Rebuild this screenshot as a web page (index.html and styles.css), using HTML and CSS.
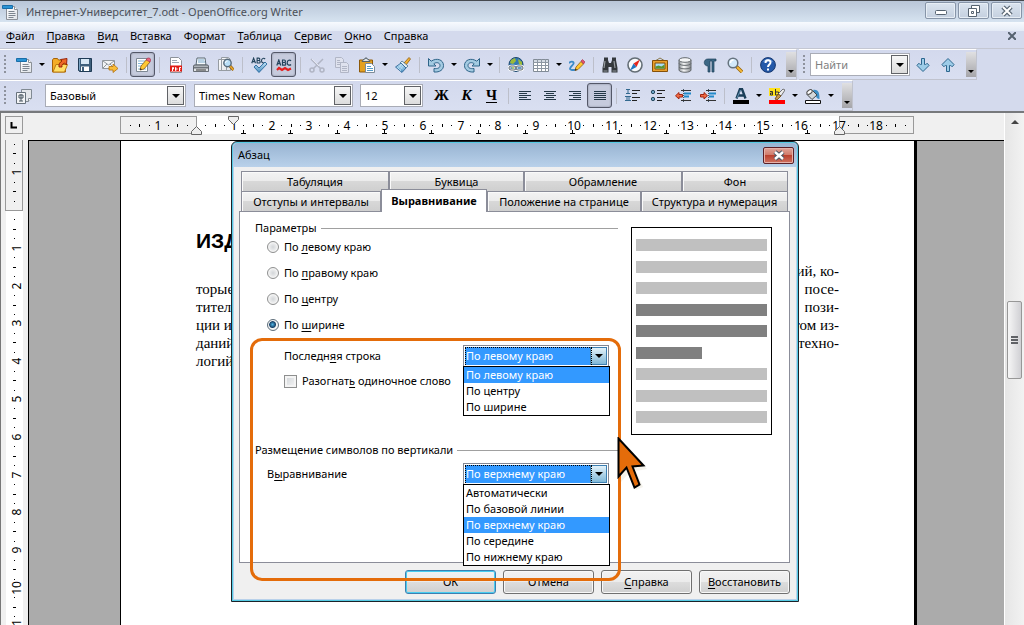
FILE: index.html
```html
<!DOCTYPE html>
<html lang="ru">
<head>
<meta charset="utf-8">
<title>Интернет-Университет_7.odt - OpenOffice.org Writer</title>
<link rel="stylesheet" href="styles.css">
</head>
<body>
<svg class="defs" aria-hidden="true">
  <defs>
    <linearGradient id="blue" x1="0" y1="0" x2="0" y2="1"><stop offset="0" stop-color="#c4e4f6"/><stop offset="1" stop-color="#4b8fc0"/></linearGradient>
    <linearGradient id="paper" x1="0" y1="0" x2="1" y2="1"><stop offset="0" stop-color="#fff"/><stop offset="1" stop-color="#dfe3e8"/></linearGradient>
    <linearGradient id="metal" x1="0" y1="0" x2="1" y2="0"><stop offset="0" stop-color="#8a8f94"/><stop offset=".4" stop-color="#fafafa"/><stop offset="1" stop-color="#85898d"/></linearGradient>
    <symbol id="doc" viewBox="0 0 16 16"><path d="M4.500 2.500h8l3 3v10h-11z" fill="url(#paper)" stroke="#8b9097"/><path d="M12.500 2.500v3h3" fill="#fff" stroke="#8b9097"/><path d="M.5 1.500h10v3h-10z" fill="#2a93d5" stroke="#1a6ea8"/><path d="M6.500 7.500h6M6.500 9.500h7M6.500 11.500h7M6.500 13.500h5" stroke="#7c858f"/></symbol>
    <symbol id="open" viewBox="0 0 16 16"><path d="M.5 15V3l1-1.500h4l1 1.500h7v12z" fill="#f4ac27" stroke="#a5620a"/><path d="M1 15l3-7.500h11.500l-3 7.500z" fill="#ffdf68" stroke="#bd7c10"/><path d="M7 10c-.5-3 1-5 3-6L8.500 2.500 15 1.500 14.500 8l-2-2C10.500 7 9.500 8 10 10z" fill="#ee6a28" stroke="#8f1a05" stroke-width=".9"/></symbol>
    <symbol id="save" viewBox="0 0 16 16"><path d="M1.500 1.500h13v13h-12l-1-1z" fill="#3e607c" stroke="#1f3b55"/><path d="M4 2h8v5H4z" fill="#d8e8f5"/><path d="M4 9.500h8V14H4z" fill="#fff"/><path d="M5 10h2v4H5z" fill="#3e607c"/><path d="M2.500 2v11" stroke="#7ba4c4"/></symbol>
    <symbol id="mail" viewBox="0 0 16 16"><path d="M.5 3.500h12v8H.5z" fill="#f3f4f5" stroke="#91979c"/><path d="M1 4l5.500 4L12 4M1 11l4-4M12 11L8 7" fill="none" stroke="#91979c"/><path d="M7 9.500h4V7l5 4.500-5 4V13H7z" fill="#f9bd38" stroke="#b2700c" stroke-width=".8"/></symbol>
    <symbol id="edit" viewBox="0 0 16 16"><path d="M1.500 1.500h11v13h-11z" fill="#fff" stroke="#7d8893"/><path d="M3 4h7M3 6.500h6M3 9h4M3 12h8" stroke="#82b5d8"/><path d="M5 13l1-4 6-7 3 3-6 7z" fill="#ffc933" stroke="#8f5c11" stroke-width=".8"/><path d="M11 3l1.500-2h2L16 3l-1 2z" fill="#e9657d" stroke="#9d2e48" stroke-width=".6"/><path d="M5 13l.5-2 1.500 1.500z" fill="#222"/></symbol>
    <symbol id="pdf" viewBox="0 0 16 16"><path d="M2.500.5h8l3 3v12h-11z" fill="#fff" stroke="#8c9299"/><path d="M4 3.500h5M4 5.500h7" stroke="#99a5b0"/><path d="M2 8.500h12v6H2z" fill="#e01c14"/><path d="M4.500 14V10.500h1v1.500h-1M7.500 10.500v3h.5l.8-.8v-1.400l-.8-.8zM11.500 14v-3.500H13M11.500 12.200h1" fill="none" stroke="#fff"/></symbol>
    <symbol id="print" viewBox="0 0 16 16"><path d="M4 1h8l1 7H3z" fill="#f5f9fc" stroke="#5b6a75"/><path d="M5 3h6M5 5h7" stroke="#7aaacc"/><path d="M1 8h14l1 3H0z" fill="#aeb4b9" stroke="#4b5258" stroke-width=".8"/><path d="M.5 11h15v3.500H.5z" fill="#e1e4e6" stroke="#4b5258" stroke-width=".8"/><path d="M3 13h10" stroke="#333"/></symbol>
    <symbol id="preview" viewBox="0 0 16 16"><path d="M.5 2.500h8v11h-8zM3.500.5h7l2 2v11h-9z" fill="url(#paper)" stroke="#969ca2"/><path d="M12 9l3.500 4" stroke="#8a5a10" stroke-width="3"/><path d="M12 9l3.500 4" stroke="#e9a62c" stroke-width="1.600"/><circle cx="9.500" cy="6" r="3.700" fill="#b9dff7" stroke="#55697a" stroke-width="1.400"/><path d="M7.500 6c0-1.500 1-2 2-2" fill="none" stroke="#fff"/></symbol>
    <symbol id="abc" viewBox="0 0 16 7"><path d="M.8 6.500L2.800 1l2 5.500M1.500 4.700h2.600M6.500 1v5M6 1h2.300c1.500 0 1.500 2.500 0 2.500h-2M6 6.200h2.700c1.500 0 1.500-2.700-.4-2.700M15 2c-1-1.500-3.800-1-3.800 1.700S14 6.700 15 5.500" fill="none" stroke="#24445c" stroke-width="1.200"/></symbol>
    <symbol id="spell" viewBox="0 0 16 16"><use href="#abc" width="15" height="7" x="0" y="0"/><path d="M3 10l2-2 3 3 6-6 2 2-8 8.500z" fill="url(#blue)" stroke="#155c94" stroke-width=".8"/></symbol>
    <symbol id="auto" viewBox="0 0 16 16"><use href="#abc" width="16" height="7" x="0" y="2"/><path d="M1 13l2-2 3 2 3-2 3 2 3-1.500" fill="none" stroke="#e32020" stroke-width="2.200"/></symbol>
    <symbol id="cut" viewBox="0 0 16 16"><path d="M2 2l10 10M14 2L4 12" stroke="#b0b5c4" stroke-width="1.500"/><path d="M3 2l7 7" stroke="#e4e6f0"/><circle cx="3" cy="13" r="2" fill="none" stroke="#b0b5c4" stroke-width="1.500"/><circle cx="13" cy="13" r="2" fill="none" stroke="#b0b5c4" stroke-width="1.500"/></symbol>
    <symbol id="copy" viewBox="0 0 16 16"><g fill="#dfe2ee" stroke="#b1b6c6"><path d="M1.500.5h6l2 2v8h-8z"/><path d="M6.500 5.500h6l2 2v8h-8z"/><path d="M3 3.500h3M3 5.500h4M3 7.500h3M8 9.500h5M8 11.500h5M8 13.500h5"/></g></symbol>
    <symbol id="paste" viewBox="0 0 16 16"><path d="M.5 3h13v12H.5z" fill="#e3a021" stroke="#8d5909"/><path d="M3 4.500L5 2h1L7 .5 8 2h1l2 2.500z" fill="#dde3e7" stroke="#56616a"/><path d="M6.500 6.500h6l3 3v6h-9z" fill="#fff" stroke="#7e8c99"/><path d="M8 9.500h4M8 11.500h6M8 13.500h6" stroke="#579bc9"/></symbol>
    <symbol id="brush" viewBox="0 0 16 16"><path d="M9 6l5-5.500 1.500 1.500L11 8z" fill="#f2b132" stroke="#8d5a0c" stroke-width=".8"/><path d="M7 4l6 5-2 2-6-5z" fill="#e5edf2" stroke="#457391" stroke-width=".8"/><path d="M6 6l5 5-4 4.500L.5 10z" fill="url(#blue)" stroke="#225d91" stroke-width=".8"/><path d="M2 10l4 4M4 8.500l4 4M3 12l3-4M5 13l3-4" stroke="#bfe5fb" stroke-width=".7"/></symbol>
    <symbol id="undo" viewBox="0 0 16 16"><path d="M.5 1.500v7.500h7.500L5.800 6.800C8 4.800 12 5.500 12 8.500c0 2.500-2.500 3.500-6 3v3.500c6 .5 9.500-2.500 9.500-6.500C15.500 2.500 8.500.5 3.200 4.200z" fill="#a4cbe2" stroke="#2f6489"/></symbol>
    <symbol id="redo" viewBox="0 0 16 16"><use href="#undo" width="16" height="16" transform="matrix(-1 0 0 1 16 0)"/></symbol>
    <symbol id="globe" viewBox="0 0 16 16"><circle cx="8" cy="7.500" r="7" fill="#3279b4" stroke="#1d476c"/><path d="M3 3l4-2 1 3-3 3-3-1zM10 2l4 3v4l-3-2zM3 9l3 1v4z" fill="#9dba38"/><rect x="1" y="9" width="7" height="4" rx="2" fill="none" stroke="#fff" stroke-width="2.400"/><rect x="8" y="9" width="7" height="4" rx="2" fill="none" stroke="#fff" stroke-width="2.400"/><rect x="1" y="9" width="7" height="4" rx="2" fill="none" stroke="#59636b"/><rect x="8" y="9" width="7" height="4" rx="2" fill="none" stroke="#59636b"/></symbol>
    <symbol id="table" viewBox="0 0 16 16"><path d="M.5 2.500h15v12H.5z" fill="#fff" stroke="#818b96"/><path d="M1 3h14v2H1z" fill="#d4dbe3"/><path d="M0 5.500h16M0 8.500h16M0 11.500h16M4.500 2v12M8.500 2v12M12.500 2v12" stroke="#8d97a2"/></symbol>
    <symbol id="draw" viewBox="0 0 16 16"><path d="M0 6c3-2.500 6-1 4 1.500s-5 5-1 5.500h3" fill="none" stroke="#3b8ac8" stroke-width="1.800"/><path d="M6 13.500l1-3.500 5-5.500 2.500 2.500-5.500 5.500z" fill="#ffc72f" stroke="#8e5a0d" stroke-width=".8"/><path d="M12 4l1.500-1.500L16 5l-1.500 2z" fill="#e5526b" stroke="#9d2e48" stroke-width=".6"/><path d="M6 13.500l.5-2L8 13z" fill="#222"/></symbol>
    <symbol id="find" viewBox="0 0 16 16"><path d="M2 3V.5h4V3l1 3h2l1-3V.5h4V3l1.500 8v4.500h-6V10h-3v5.500h-6V11z" fill="#33383c"/><path d="M3 4l-1 7M12 4l1 7M1.500 14h4M10.500 14h4" stroke="#959b9f" stroke-width="1.200"/></symbol>
    <symbol id="compass" viewBox="0 0 16 16"><circle cx="8" cy="8" r="7" fill="#f8fbfd" stroke="#646e75" stroke-width="1.600"/><path d="M13 2.500L9.500 10 6.500 6.500z" fill="#e6281d"/><path d="M3 13.500L6.500 6.500 9.500 10z" fill="#2177c0"/></symbol>
    <symbol id="gallery" viewBox="0 0 16 16"><path d="M3 4l5-3 5 3" fill="none" stroke="#8a7a50"/><path d="M.5 3.500h15v11H.5z" fill="#e8a02c" stroke="#855008"/><path d="M3 6h10v6H3z" fill="#a9ddf7" stroke="#855008"/><path d="M3.500 11.500v-2l3-1 3 1 3-2v4z" fill="#5a952e"/></symbol>
    <symbol id="db" viewBox="0 0 16 16"><path d="M2 3v10c0 3 12 3 12 0V3z" fill="url(#metal)" stroke="#656a6e"/><ellipse cx="8" cy="3" rx="6" ry="2.300" fill="#f5f6f7" stroke="#656a6e"/><path d="M2 6.500c1 2.500 11 2.500 12 0M2 10c1 2.500 11 2.500 12 0" fill="none" stroke="#656a6e"/></symbol>
    <symbol id="para" viewBox="0 0 16 16"><path d="M14 2H6C1 2 1 9 6 9v6h2V4h2v11h2V4h2z" fill="#3b6785" stroke="#1c405a" stroke-width=".7"/></symbol>
    <symbol id="zoom" viewBox="0 0 16 16"><path d="M9 9l6 6" stroke="#98640b" stroke-width="3.400"/><path d="M10 10l5 5" stroke="#f5ba38" stroke-width="1.800"/><circle cx="6" cy="6" r="4.800" fill="#d3eafa" stroke="#66737e" stroke-width="1.500"/><path d="M3.500 6c0-2 1-3 3-3" fill="none" stroke="#fff" stroke-width="1.400"/></symbol>
    <symbol id="help" viewBox="0 0 16 16"><circle cx="8" cy="8" r="7.400" fill="#2459a9" stroke="#17386f"/><path d="M3 5c2-4 8-4 10 0-3-1-7-1-10 0z" fill="#6f9cd8"/><path d="M5.500 6c0-3.500 5-3.500 5-.5 0 2-2.500 2-2.500 4.500M8 11.500v2" fill="none" stroke="#fff" stroke-width="2"/></symbol>
    <symbol id="down" viewBox="0 0 16 16"><path d="M6.500 1.500h3v6c.5 1 1.500-1 3-1L14 8.500l-6 6-6-6 1.500-2c1.500 0 2.500 2 3 1z" fill="#9dcce8" stroke="#2c668e"/></symbol>
    <symbol id="up" viewBox="0 0 16 16"><use href="#down" width="16" height="16" transform="matrix(1 0 0 -1 0 16)"/></symbol>
    <symbol id="styles" viewBox="0 0 16 16"><path d="M5.500 1.500h10v9l-3 3h-7z" fill="#e3e6ea" stroke="#818a93"/><path d="M12.500 13.500v-3h3" fill="#fff" stroke="#818a93"/><path d="M.5 4.500h9v11h-9z" fill="#f3f4f6" stroke="#66717b"/><path d="M5 6v7M3 7h4v3H3zM3 13h4" fill="none" stroke="#46545f"/></symbol>
    <symbol id="al" viewBox="0 0 16 16"><path d="M2 3.500h12M2 5.500h8M2 7.500h12M2 9.500h8M2 11.500h12" stroke="#243947"/></symbol>
    <symbol id="ac" viewBox="0 0 16 16"><path d="M2 3.500h12M4 5.500h8M2 7.500h12M4 9.500h8M2 11.500h12" stroke="#243947"/></symbol>
    <symbol id="ar" viewBox="0 0 16 16"><path d="M2 3.500h12M6 5.500h8M2 7.500h12M6 9.500h8M2 11.500h12" stroke="#243947"/></symbol>
    <symbol id="aj" viewBox="0 0 16 16"><path d="M2 3.500h12M2 5.500h12M2 7.500h12M2 9.500h12M2 11.500h12" stroke="#243947"/></symbol>
    <symbol id="num" viewBox="0 0 16 16"><path d="M1 1.500h4M3 1.500v4M1 5.500h4M0 8.500h6M2 8.500v4M4 8.500v4M0 12.500h6" stroke="#33698f"/><path d="M7 2.500h8M7 5.500h5M7 9.500h8M7 12.500h5" stroke="#222"/></symbol>
    <symbol id="bul" viewBox="0 0 16 16"><circle cx="3" cy="4" r="1.700" fill="#6aa2c6" stroke="#26495f"/><circle cx="3" cy="11" r="1.700" fill="#6aa2c6" stroke="#26495f"/><path d="M7 2.500h8M7 5.500h5M7 9.500h8M7 12.500h5" stroke="#222"/></symbol>
    <symbol id="outd" viewBox="0 0 16 16"><path d="M8.500 1v14" stroke="#456" stroke-dasharray="1 1"/><path d="M6 2.500h10M6 12.500h10" stroke="#333"/><path d="M9 5.500h7M9 8.500h5" stroke="#2189c9" stroke-width="2"/><path d="M7.500 6.500v2.500H4v2L.5 7.800 4 4.500v2z" fill="#ef6a43" stroke="#a02512"/></symbol>
    <symbol id="ind" viewBox="0 0 16 16"><path d="M8.500 1v14" stroke="#456" stroke-dasharray="1 1"/><path d="M6 2.500h10M6 12.500h10" stroke="#333"/><path d="M9 5.500h7M9 8.500h5" stroke="#2189c9" stroke-width="2"/><path d="M.5 6.500v2.500H4v2l3.500-3.200L4 4.500v2z" fill="#ef6a43" stroke="#a02512"/></symbol>
    <symbol id="fcol" viewBox="0 0 16 16"><path d="M0 12h16v4H0z"/><path d="M3.500 10.500L7 1h2l3.500 9.500M5 7.500h6" fill="none" stroke="#1b3f59" stroke-width="2.400"/><path d="M4 10L7.500 2" stroke="#6fa2c4" stroke-width=".8"/></symbol>
    <symbol id="hcol" viewBox="0 0 16 16"><path d="M0 0h11v8H0z" fill="#ffe21a"/><path d="M1 3.500h2.500V7H1.500V5h2M6.500 1v6h3V4h-3" fill="none" stroke="#333"/><path d="M9 6l5-5 2 1-4 6z" fill="#ececec" stroke="#555" stroke-width=".8"/><path d="M6 11l3-5 3 2-4 4z" fill="#c9974b" stroke="#68420d" stroke-width=".8"/><path d="M0 12h16v4H0z" fill="#f00"/></symbol>
    <symbol id="bcol" viewBox="0 0 16 16"><path d="M8 2c6-1 6.500 4 6.500 9-4 0-3-4-4.500-5z" fill="#3d8ec5"/><path d="M3 4l4-2 5 5-5 4.500-5-5z" fill="#d3d7da" stroke="#43494d"/><ellipse cx="4.500" cy="4" rx="3" ry="1.800" transform="rotate(-35 4.500 4)" fill="#fff" stroke="#555"/><path d="M.5 12.500h15v3H.5z" fill="#fff" stroke="#111"/></symbol>
  </defs>
</svg>

<header class="titlebar">
  <svg class="icon"><use href="#doc"/></svg>
  <h1 class="title">Интернет-Университет_7.odt - OpenOffice.org Writer</h1>
  <div class="window-buttons">
    <button class="winbtn" aria-label="Свернуть"><svg width="16" height="14"><rect x="2.500" y="6.500" width="11" height="4" rx="1" fill="#fff" stroke="#566370"/></svg></button>
    <button class="winbtn" aria-label="Восстановить окно"><svg width="16" height="14"><path d="M5.500 1.500h8v7h-8z" fill="#fff" stroke="#566370"/><path d="M2.500 4.500h8v8h-8z" fill="#fff" stroke="#566370"/><path d="M5.500 7.500h2v2h-2z" fill="none" stroke="#566370"/></svg></button>
    <button class="winbtn" aria-label="Закрыть"><svg width="16" height="14"><path d="M4 3l8 8M12 3l-8 8" stroke="#566370" stroke-width="4.500"/><path d="M4 3l8 8M12 3l-8 8" stroke="#fff" stroke-width="2"/></svg></button>
  </div>
</header>

<nav class="menubar">
  <button class="menu"><u>Ф</u>айл</button><button class="menu"><u>П</u>равка</button><button class="menu"><u>В</u>ид</button><button class="menu">Вс<u>т</u>авка</button><button class="menu">Фо<u>р</u>мат</button><button class="menu"><u>Т</u>аблица</button><button class="menu">С<u>е</u>рвис</button><button class="menu"><u>О</u>кно</button><button class="menu">Спр<u>а</u>вка</button>
  <button class="close-doc" aria-label="Закрыть документ"><svg width="8" height="8"><path d="M0 0l8 8M8 0L0 8" stroke="#566270" stroke-width="2"/></svg></button>
</nav>

<div class="toolrow">
  <div class="toolbar" role="toolbar" aria-label="Стандартная">
    <span class="grip"></span>
    <button class="tool" aria-label="Создать"><svg class="icon"><use href="#doc"/></svg></button><button class="drop" aria-label="Создать, список"></button>
    <button class="tool" aria-label="Открыть"><svg class="icon"><use href="#open"/></svg></button>
    <button class="tool" aria-label="Сохранить"><svg class="icon"><use href="#save"/></svg></button>
    <button class="tool" aria-label="Письмо"><svg class="icon"><use href="#mail"/></svg></button>
    <span class="sep"></span>
    <button class="tool pressed" aria-label="Редактировать"><svg class="icon"><use href="#edit"/></svg></button>
    <span class="sep"></span>
    <button class="tool" aria-label="Экспорт в PDF"><svg class="icon"><use href="#pdf"/></svg></button>
    <button class="tool" aria-label="Печать"><svg class="icon"><use href="#print"/></svg></button>
    <button class="tool" aria-label="Предпросмотр"><svg class="icon"><use href="#preview"/></svg></button>
    <span class="sep"></span>
    <button class="tool" aria-label="Орфография"><svg class="icon"><use href="#spell"/></svg></button>
    <button class="tool pressed" aria-label="Автопроверка"><svg class="icon"><use href="#auto"/></svg></button>
    <span class="sep"></span>
    <button class="tool" aria-label="Вырезать"><svg class="icon"><use href="#cut"/></svg></button>
    <button class="tool" aria-label="Копировать"><svg class="icon"><use href="#copy"/></svg></button>
    <button class="tool" aria-label="Вставить"><svg class="icon"><use href="#paste"/></svg></button><button class="drop" aria-label="Вставить, список"></button>
    <button class="tool" aria-label="Формат по образцу"><svg class="icon"><use href="#brush"/></svg></button>
    <span class="sep"></span>
    <button class="tool" aria-label="Отменить"><svg class="icon"><use href="#undo"/></svg></button><button class="drop" aria-label="Отменить, список"></button>
    <button class="tool" aria-label="Вернуть"><svg class="icon"><use href="#redo"/></svg></button><button class="drop" aria-label="Вернуть, список"></button>
    <span class="sep"></span>
    <button class="tool" aria-label="Гиперссылка"><svg class="icon"><use href="#globe"/></svg></button>
    <button class="tool" aria-label="Таблица"><svg class="icon"><use href="#table"/></svg></button><button class="drop" aria-label="Таблица, список"></button>
    <button class="tool" aria-label="Рисунок"><svg class="icon"><use href="#draw"/></svg></button>
    <span class="sep"></span>
    <button class="tool" aria-label="Найти и заменить"><svg class="icon"><use href="#find"/></svg></button>
    <button class="tool" aria-label="Навигатор"><svg class="icon"><use href="#compass"/></svg></button>
    <button class="tool" aria-label="Галерея"><svg class="icon"><use href="#gallery"/></svg></button>
    <button class="tool" aria-label="Источники данных"><svg class="icon"><use href="#db"/></svg></button>
    <button class="tool" aria-label="Непечатаемые символы"><svg class="icon"><use href="#para"/></svg></button>
    <button class="tool" aria-label="Масштаб"><svg class="icon"><use href="#zoom"/></svg></button>
    <span class="sep"></span>
    <button class="tool" aria-label="Помощь"><svg class="icon"><use href="#help"/></svg></button>
    <button class="more" aria-label="Ещё"></button>
  </div>
  <div class="toolbar" role="toolbar" aria-label="Поиск">
    <span class="grip"></span>
    <div class="combo combo-find"><input class="field" type="text" placeholder="Найти" aria-label="Найти"><button class="arrow" aria-label="Список"></button></div>
    <button class="tool" aria-label="Вниз"><svg class="icon"><use href="#down"/></svg></button>
    <button class="tool" aria-label="Вверх"><svg class="icon"><use href="#up"/></svg></button>
    <button class="more" aria-label="Ещё"></button>
  </div>
</div>

<div class="toolrow toolrow-format">
  <div class="toolbar" role="toolbar" aria-label="Форматирование">
    <span class="grip"></span>
    <button class="tool" aria-label="Стили"><svg class="icon"><use href="#styles"/></svg></button>
    <div class="combo combo-style"><input class="field" type="text" value="Базовый" aria-label="Стиль"><button class="arrow" aria-label="Список"></button></div>
    <div class="combo combo-font"><input class="field" type="text" value="Times New Roman" aria-label="Шрифт"><button class="arrow" aria-label="Список"></button></div>
    <div class="combo combo-size"><input class="field" type="text" value="12" aria-label="Размер"><button class="arrow" aria-label="Список"></button></div>
    <button class="tool letter">Ж</button>
    <button class="tool letter italic">К</button>
    <button class="tool letter"><u>Ч</u></button>
    <span class="sep"></span>
    <button class="tool" aria-label="По левому краю"><svg class="icon"><use href="#al"/></svg></button>
    <button class="tool" aria-label="По центру"><svg class="icon"><use href="#ac"/></svg></button>
    <button class="tool" aria-label="По правому краю"><svg class="icon"><use href="#ar"/></svg></button>
    <button class="tool pressed" aria-label="По ширине"><svg class="icon"><use href="#aj"/></svg></button>
    <span class="sep"></span>
    <button class="tool" aria-label="Нумерация"><svg class="icon"><use href="#num"/></svg></button>
    <button class="tool" aria-label="Маркеры"><svg class="icon"><use href="#bul"/></svg></button>
    <button class="tool" aria-label="Уменьшить отступ"><svg class="icon"><use href="#outd"/></svg></button>
    <button class="tool" aria-label="Увеличить отступ"><svg class="icon"><use href="#ind"/></svg></button>
    <span class="sep"></span>
    <button class="tool" aria-label="Цвет шрифта"><svg class="icon"><use href="#fcol"/></svg></button><button class="drop" aria-label="Цвет шрифта, список"></button>
    <button class="tool" aria-label="Выделение цветом"><svg class="icon"><use href="#hcol"/></svg></button><button class="drop" aria-label="Выделение, список"></button>
    <button class="tool" aria-label="Фон абзаца"><svg class="icon"><use href="#bcol"/></svg></button><button class="drop" aria-label="Фон, список"></button>
    <button class="more" aria-label="Ещё"></button>
  </div>
</div>

<main class="workspace">
  <div class="corner"><button class="tabkind" aria-label="Тип табуляции"><svg width="8" height="8"><path d="M1.500 1v5.500H7" fill="none" stroke="#000" stroke-width="2"/></svg></button></div>
  <div class="hruler"><svg id="hruler" width="886" height="26"></svg></div>
  <div class="vruler"><svg id="vruler" width="20" height="100%"></svg></div>
  <div class="canvas">
    <article class="page">
      <h2 class="doc-title">ИЗД</h2>
      <p class="line line-end"><span>ний, ко-</span></p>
      <p class="line"><span>торые</span><span>посе-</span></p>
      <p class="line"><span>тител</span><span>пози-</span></p>
      <p class="line"><span>ции и</span><span>том из-</span></p>
      <p class="line"><span>даний</span><span>техно-</span></p>
      <p class="line"><span>логий</span></p>
    </article>
  </div>
  <div class="scrollbar">
    <svg width="8" height="5"><path d="M0 5l4-4 4 4z" fill="#444"/></svg>
    <div class="thumb"><span class="notch"></span><span class="notch"></span><span class="notch"></span></div>
  </div>

  <section class="dialog" role="dialog" aria-labelledby="dlg-title">
    <header class="dialog-head">
      <h2 class="dialog-title" id="dlg-title">Абзац</h2>
      <button class="dialog-close" aria-label="Закрыть"><svg width="14" height="11"><path d="M3 2l8 7M11 2l-8 7" stroke="#4d5866" stroke-width="4.500"/><path d="M3 2l8 7M11 2l-8 7" stroke="#fff" stroke-width="2.400"/></svg></button>
    </header>
    <div class="dialog-body">
      <div class="tabs" role="tablist">
        <div class="tabrow tabrow-back"><button class="tab" role="tab">Табуляция</button><button class="tab" role="tab">Буквица</button><button class="tab" role="tab">Обрамление</button><button class="tab" role="tab">Фон</button></div>
        <div class="tabrow tabrow-front"><button class="tab" role="tab">Отступы и интервалы</button><button class="tab active" role="tab" aria-selected="true">Выравнивание</button><button class="tab" role="tab">Положение на странице</button><button class="tab" role="tab">Структура и нумерация</button></div>
      </div>
      <div class="panel" role="tabpanel">
        <div class="settings">
          <fieldset class="group">
            <legend class="legend">Параметры</legend>
            <label class="choice"><input class="radio" type="radio" name="align"><span>По <u>л</u>евому краю</span></label>
            <label class="choice"><input class="radio" type="radio" name="align"><span>По <u>п</u>равому краю</span></label>
            <label class="choice"><input class="radio" type="radio" name="align"><span>По <u>ц</u>ентру</span></label>
            <label class="choice"><input class="radio" type="radio" name="align" checked><span>По <u>ш</u>ирине</span></label>
            <div class="pair pair-last">
              <label for="last">Последн<u>я</u>я строка</label>
              <div class="picker">
                <select class="select" id="last"><option>По левому краю</option><option>По центру</option><option>По ширине</option></select>
                <ul class="list" role="listbox"><li class="item chosen" role="option">По левому краю</li><li class="item" role="option">По центру</li><li class="item" role="option">По ширине</li></ul>
              </div>
            </div>
            <label class="single"><input class="check" type="checkbox"><span>Разогнат<u>ь</u> одиночное слово</span></label>
          </fieldset>
          <fieldset class="group">
            <legend class="legend">Размещение символов по вертикали</legend>
            <div class="pair">
              <label for="vert">В<u>ы</u>равнивание</label>
              <div class="picker">
                <select class="select" id="vert"><option>По верхнему краю</option><option>Автоматически</option><option>По базовой линии</option><option>По середине</option><option>По нижнему краю</option></select>
                <ul class="list" role="listbox"><li class="item" role="option">Автоматически</li><li class="item" role="option">По базовой линии</li><li class="item chosen" role="option">По верхнему краю</li><li class="item" role="option">По середине</li><li class="item" role="option">По нижнему краю</li></ul>
              </div>
            </div>
          </fieldset>
        </div>
        <div class="sample" aria-hidden="true"><i class="bar"></i><i class="bar"></i><i class="bar"></i><i class="bar dark"></i><i class="bar dark"></i><i class="bar dark short"></i><i class="bar"></i><i class="bar"></i><i class="bar"></i></div>
      </div>
      <footer class="actions"><button class="btn primary">ОК</button><button class="btn">Отмена</button><button class="btn"><u>С</u>правка</button><button class="btn"><u>В</u>осстановить</button></footer>
    </div>
    <div class="highlight"></div>
    <svg class="pointer" width="32" height="56" viewBox="0 0 32 56"><path d="M4 4v41l8-9 7 17 7-3-7-16 11-2z" fill="#efece2" opacity=".7"/><path d="M1.500 1.500v38l8-9 8 20 5-3-7-18 11-1z" fill="#e46c0a" stroke="#000" stroke-width="2"/></svg>
  </section>
</main>
<script src="rulers.js"></script>
</body>
</html>
```

FILE: styles.css
```css
* { box-sizing: border-box; }
body {
  margin: 0; height: 100vh; overflow: hidden; display: flex; flex-direction: column;
  font: 12px/16px "Noto Sans", "Open Sans", sans-serif; font-size: 11px; color: #000; background: #d4daed;
}
button, input, select { font: inherit; color: inherit; margin: 0; padding: 0; border: 0; background: none; border-radius: 0; }
h1, h2, p, ul { margin: 0; padding: 0; font: inherit; }
.defs { position: absolute; width: 0; height: 0; }
.icon { width: 16px; height: 16px; display: block; flex: none; }
.sep { width: 8px; height: 16px; flex: none; background: linear-gradient(#bcbfca, #bcbfca) 4px 0 / 1px 100% no-repeat; }

.titlebar {
  height: 22px; flex: none; display: flex; align-items: center; gap: 8px; padding-left: 2px;
  background: linear-gradient(#b9c6d8, #d6e3f0); border-top: 1px solid #45494f;
}
.title { flex: 1; color: #4b5058; white-space: nowrap; }
.window-buttons { display: flex; gap: 2px; padding-right: 2px; align-self: flex-start; padding-top: 1px; }
.winbtn { width: 31px; height: 17px; display: flex; align-items: center; justify-content: center; border: 1px solid #8795a8; border-radius: 2px; background: linear-gradient(#dbe4ef, #c4d0df); box-shadow: inset 0 0 0 1px #e7eef5; }

.menubar { height: 27px; flex: none; display: flex; align-items: center; padding: 1px 8px 0 6px; gap: 12px; background: linear-gradient(#f7fafe, #e4ebf6 9px, #d4daed 9px); border-bottom: 1px solid #c4c7d2; }
.menu { white-space: nowrap; }
u { text-underline-offset: 2px; }
.close-doc { margin-left: auto; height: 16px; }

.toolrow { display: flex; gap: 2px; height: 31px; flex: none; background: #d4daed; }
.toolbar { display: flex; align-items: center; padding-left: 4px; border: 1px solid #c0c3ce; border-top-color: #fff; border-width: 1px 1px 1px 0; background: linear-gradient(#d3d9ed, #d9dff1); }
.grip { width: 7px; height: 20px; flex: none; background: repeating-linear-gradient(#8e929d 0 2px, transparent 2px 4px) 0 0 / 2px 100% no-repeat; }
.tool { width: 25px; height: 25px; flex: none; display: flex; align-items: center; justify-content: center; }
.tool.pressed { border: 1px solid #545868; border-radius: 3px; background: #c6cbdd; box-shadow: inset 0 0 2px #7c8092; }
.drop { width: 11px; height: 25px; flex: none; display: flex; align-items: center; justify-content: center; }
.drop::before, .arrow::before { content: ""; border: solid transparent; border-width: 4px 4px 0; border-top-color: #000; }
.drop::before { border-width: 3px 3px 0; }
.more { width: 10px; height: 25px; margin-left: 6px; flex: none; display: flex; align-items: flex-end; justify-content: center; padding-bottom: 4px; background: linear-gradient(#e0e0e2, #a5a5a9); }
.more::before { content: ""; border: solid transparent; border-width: 3px 3px 0; border-top-color: #000; }
.combo { display: flex; height: 23px; border: 1px solid #a9acb6; background: #fff; padding: 1px; }
.field { flex: 1; width: 0; min-width: 0; padding-left: 3px; }
.field::placeholder { color: #808080; opacity: 1; }
.arrow { width: 17px; border: 1px solid #606266; background: linear-gradient(#f6f6f6, #dcdcdc); display: flex; align-items: center; justify-content: center; }
.combo-find { width: 100px; }
.combo-style { width: 141px; margin-left: 9px; }
.combo-font { width: 159px; margin-left: 8px; }
.combo-size { width: 63px; margin: 0 6px 0 7px; }
.letter { font: bold 15px "Liberation Serif", serif; }
.italic { font-style: italic; }

.workspace {
  position: relative; flex: 1; min-height: 0; display: grid; grid-template-columns: 27px 1fr 20px; grid-template-rows: 27px 1fr;
  border-left: 1px solid #777; border-top: 2px solid #77797c; background: #f0f0f0;
}
.corner { padding: 3px 0 0 4px; }
.tabkind { width: 18px; height: 18px; border: 1px solid #999; display: flex; align-items: center; justify-content: center; }
.hruler { overflow: hidden; padding-top: 1px; }
.hruler svg, .vruler svg { display: block; }
.vruler { overflow: hidden; padding-left: 4px; grid-row: 2; grid-column: 1; }
.canvas { grid-row: 2; grid-column: 2; overflow: hidden; display: flex; background: #ababab; border-left: 1px solid #000; border-top: 1px solid #000; padding-left: 91px; padding-right: 87px; }
.page { flex: 1; background: #fff; border-left: 1px solid #000; border-right: 3px solid #000; padding: 86px 75px 0; font: 15px/18px "Liberation Serif", serif; }
.doc-title { font: bold 21px/28px "Liberation Sans", sans-serif; margin-bottom: 7px; }
.line { display: flex; justify-content: space-between; }
.line-end { justify-content: flex-end; }
.scrollbar { grid-column: 3; grid-row: 1 / 3; display: flex; flex-direction: column; align-items: center; padding-top: 6px; border-left: 1px solid #fff; background: linear-gradient(90deg, #e6e6e6, #f2f2f2); }
.thumb { width: 15px; height: 78px; margin-top: 177px; border: 1px solid #979797; border-radius: 2px; background: linear-gradient(90deg, #f6f6f6, #d0d0d4); display: flex; flex-direction: column; align-items: center; justify-content: center; gap: 1px; }
.notch { width: 7px; height: 2px; background: #606266; }

.dialog { position: absolute; left: 230px; top: 28px; width: 568px; border: 1px solid #1b2229; border-radius: 6px 6px 0 0; background: #b9d1ea; box-shadow: inset 0 0 0 1px #55cbe4; padding: 1px; }
.dialog-head { height: 24px; display: flex; align-items: center; padding: 0 3px 0 5px; border-radius: 5px 5px 0 0; background: linear-gradient(#98b4d2, #b9d1ea); }
.dialog-title { flex: 1; }
.dialog-close { width: 31px; height: 17px; display: flex; align-items: center; justify-content: center; border: 1px solid #5b2027; border-radius: 2px; background: linear-gradient(#e0a59a, #d17c6c 45%, #bb4230 50%, #cf7260); box-shadow: inset 0 0 0 1px #e6b2aa; }
.dialog-body { margin: 0 1px 1px; background: #f0f0f0; padding: 4px 6px 5px 5px; }
.tabs { padding: 0 2px; }
.tabrow { display: grid; }
.tabrow-back { grid-template-columns: 148fr 135fr 158fr 106fr; }
.tabrow-front { grid-template-columns: 140fr 106fr 154fr 147fr; }
.tab { height: 20px; min-width: 0; white-space: nowrap; border: 1px solid #8b8d99; border-bottom: 0; background: linear-gradient(#f3f3f3, #ebebeb 50%, #d8d8d8 50%, #cfcfcf); box-shadow: inset 1px 1px #fafafa; }
.tab.active { height: 23px; margin: -2px 0 -1px; position: relative; background: #fff; font-weight: bold; box-shadow: none; padding-bottom: 1px; }
.panel { height: 352px; display: flex; border: 1px solid #8b8d99; background: #fff; padding: 7px 17px 0 15px; gap: 13px; }
.settings { flex: 1; }
.group { border: 0; margin: 0; padding: 0 0 0 12px; min-width: 0; }
.group + .group { margin-top: 50px; }
.legend { display: flex; align-items: center; gap: 4px; width: calc(100% + 12px); margin-left: -12px; padding: 0; height: 18px; white-space: nowrap; }
.legend::after { content: ""; flex: 1; height: 1px; background: #a0a0a0; }
.choice { display: flex; align-items: center; gap: 5px; height: 20px; margin-bottom: 6px; }
.radio { appearance: none; flex: none; width: 12px; height: 12px; border: 1px solid #8e8f8f; border-radius: 50%; background: radial-gradient(#d3d6d9, #f5f5f5 70%); box-shadow: inset 0 0 0 1px #f4f4f4; }
.radio:checked { background: radial-gradient(circle at 45% 45%, #4fb4e4 0, #164168 3px, #f4f4f4 4px); border-color: #5d6d7a; }
.pair { display: flex; align-items: center; justify-content: space-between; height: 22px; margin-top: 4px; padding-right: 9px; }
.pair-last { padding-left: 17px; margin-top: 10px; }
.picker { position: relative; width: 146px; }
.select { appearance: none; display: block; width: 100%; height: 22px; border: 1px solid #838792; padding-left: 2px; line-height: 16px; color: #fff;
  background: url("data:image/svg+xml,%3Csvg xmlns='http://www.w3.org/2000/svg' width='17' height='18'%3E%3ClinearGradient id='g' x2='0' y2='1'%3E%3Cstop stop-color='%23e5f3fa'/%3E%3Cstop offset='1' stop-color='%237db6d6'/%3E%3C/linearGradient%3E%3Crect x='.5' y='.5' width='16' height='17' fill='url(%23g)' stroke='%233c7fb1'/%3E%3Cpath d='M5 7h8l-4 4z'/%3E%3C/svg%3E") right 1px center no-repeat, linear-gradient(#39f, #39f) 1px 1px / 125px 18px no-repeat #fff; }
.picker::after { content: ""; position: absolute; left: 2px; top: 2px; width: 125px; height: 18px; border: 1px dotted #000; pointer-events: none; }
.list { position: absolute; z-index: 2; left: 0; top: 21px; width: 147px; list-style: none; border: 1px solid #000; background: #fff; }
.item { height: 16px; line-height: 16px; padding-left: 2px; white-space: nowrap; }
.item.chosen { background: #39f; color: #fff; }
.single { display: flex; align-items: center; gap: 5px; height: 20px; margin: 4px 0 0 17px; white-space: nowrap; }
.check { appearance: none; flex: none; width: 13px; height: 13px; border: 1px solid #8e8f8f; background: linear-gradient(135deg, #cfd3d7, #f6f6f6); box-shadow: inset 0 0 0 2px #f4f4f4; }
.sample { width: 141px; height: 208px; margin-top: 8px; border: 1px solid #000; padding: 11px 4px; display: flex; flex-direction: column; justify-content: space-between; }
.bar { height: 12px; background: #c0c0c0; }
.bar.dark { background: #808080; }
.bar.short { width: 50%; }
.actions { display: flex; justify-content: flex-end; gap: 7px; padding-top: 7px; }
.btn { width: 91px; height: 24px; border: 1px solid #707070; border-radius: 3px; background: linear-gradient(#f2f2f2, #ebebeb 50%, #dddddd 50%, #cfcfcf); box-shadow: inset 0 0 0 1px #f8f8f8; white-space: nowrap; }
.btn.primary { border-color: #3c7fb1; box-shadow: inset 0 0 0 1px #48cdf0; }
.highlight { position: absolute; left: 18px; top: 196px; width: 371px; height: 243px; border: 3px solid #e46c0a; border-radius: 12px; pointer-events: none; }
.pointer { position: absolute; left: 385px; top: 295px; }
```

FILE: rulers.js
```js
const NS = "http://www.w3.org/2000/svg";
const CM = 37.8;

function add(svg, tag, attrs, text) {
  const el = document.createElementNS(NS, tag);
  for (const key in attrs) el.setAttribute(key, attrs[key]);
  if (text !== undefined) el.textContent = text;
  svg.appendChild(el);
}

function rect(svg, x, y, width, height, fill, stroke) {
  add(svg, "rect", { x, y, width, height, fill, stroke: stroke || "none" });
}

// Horizontal ruler: zero at the left text margin.
const h = document.getElementById("hruler");
const H0 = 168;
rect(h, H0, 2, 643, 18, "#fff");
rect(h, 92.5, 2.5, 76, 17, "#f0f0f0", "#999");
rect(h, 811.5, 2.5, 74, 17, "#f0f0f0", "#999");
for (let q = -7; q < 76; q++) {
  const x = Math.round(H0 + q * CM / 4);
  if (q % 4 === 0) {
    if (q !== 0) add(h, "text", { x, y: 16, "text-anchor": "middle", "font-size": 12 }, Math.abs(q / 4));
  } else if (q % 2 === 0) rect(h, x, 10, 1, 3, "#000");
  else rect(h, x, 11, 1, 1, "#000");
}
for (let i = 1; i < 14; i++) {
  rect(h, H0 + 47 * i, 16, 1, 4, "#000");
  rect(h, H0 + 47 * i - 2, 19, 5, 1, "#000");
}
for (const x of [168, 811]) add(h, "path", { d: `M${x - 4.5} 20.5v-3l5-5 5 5v3z`, fill: "#eee", stroke: "#666" });
add(h, "path", { d: "M200.500 2.500h10v3l-5 5-5-5z", fill: "#eee", stroke: "#666" });

// Vertical ruler: zero at the top text margin, drawn down to the window edge.
const v = document.getElementById("vruler");
const V0 = 70;
const height = v.parentElement.clientHeight;
rect(v, 1, 0, 17, height, "#fff");
rect(v, .5, -1, 17, 71.5, "#f0f0f0", "#999");
for (let q = -7; V0 + q * CM / 4 < height + 4; q++) {
  const y = Math.round(V0 + q * CM / 4);
  if (q % 4 === 0) {
    if (q !== 0) add(v, "text", { transform: `translate(16 ${y}) rotate(-90)`, "text-anchor": "middle", "font-size": 12 }, Math.abs(q / 4));
  } else if (q % 2 === 0) rect(v, 8, y, 3, 1, "#000");
  else rect(v, 9, y, 1, 1, "#000");
}
```
